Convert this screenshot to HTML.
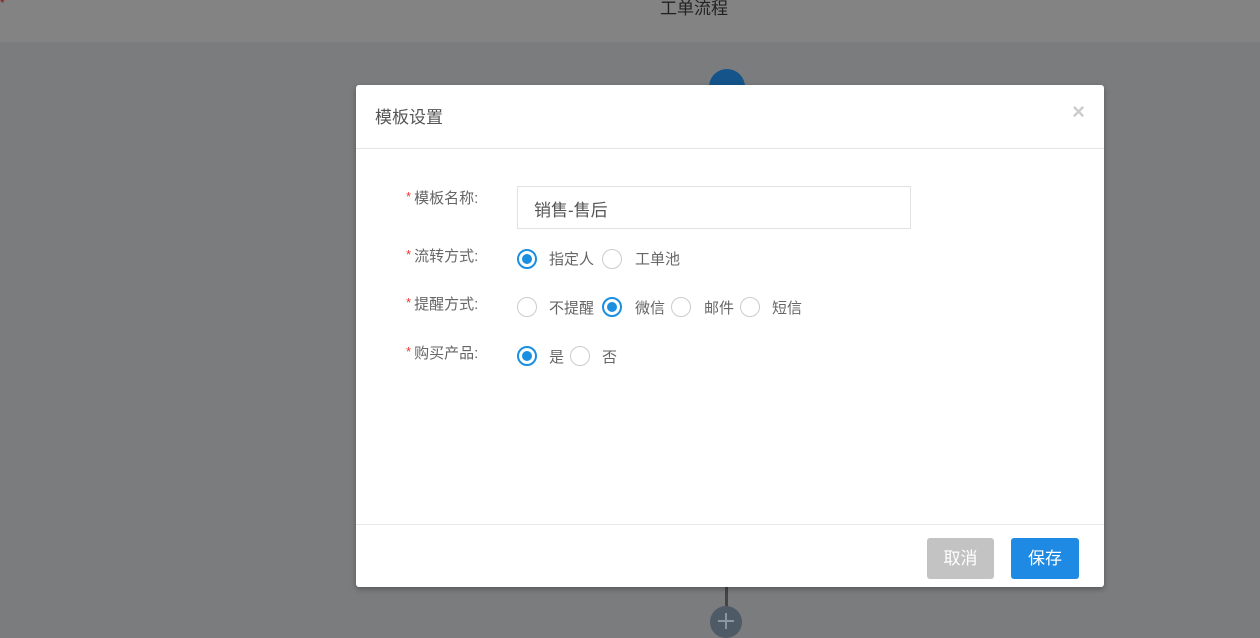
<!DOCTYPE html>
<html><head><meta charset="utf-8"><style>
*{margin:0;padding:0;box-sizing:border-box}
body{width:1260px;height:627px;overflow:hidden;background:#7b7c7e;font-family:"Liberation Sans","Noto Sans CJK SC",sans-serif;position:relative}
.top{position:absolute;left:0;top:0;width:1260px;height:42px;background:#838383}
.top .t{position:absolute;left:660px;top:-6px;font-size:17px;color:#222}
.star0{position:absolute;left:0;top:-4px;color:#8a1a1a;font-size:12px}
.c1{position:absolute;left:709px;top:69px;width:36px;height:36px;border-radius:50%;background:#14548a}
.line{position:absolute;left:725px;top:585px;width:3px;height:25px;background:#444}
.c2{position:absolute;left:710px;top:606px;width:32px;height:32px;border-radius:50%;background:#4e5a66}
.c2:before{content:"";position:absolute;left:8px;top:14px;width:16px;height:2px;background:#8a96a0}
.c2:after{content:"";position:absolute;left:15px;top:7px;width:2px;height:16px;background:#8a96a0}
.m{position:absolute;left:356px;top:85px;width:748px;height:502px;background:#fff;border-radius:3px;box-shadow:0 2px 6px rgba(0,0,0,.3)}
.hd{height:64px;border-bottom:1px solid #e5e5e5;position:relative}
.hd .tt{position:absolute;left:19px;top:18px;font-size:17px;color:#555}
.hd .x{position:absolute;right:19px;top:14px;font-size:22px;color:#ccc;font-weight:bold}
.row{position:absolute;left:0;font-size:15px;color:#666}
.lab{position:absolute;left:50px;white-space:nowrap}
.lab i{color:#e33;font-style:normal;font-size:13px;margin-right:3px;position:relative;top:-2px}
.inp{position:absolute;left:161px;top:101px;width:394px;height:43px;border:1px solid #e2e2e2;font-size:17px;color:#555;padding:9px 16px}
.r{position:absolute;width:20px;height:20px;border-radius:50%;border:1px solid #ccc}
.r.on{border:2px solid #1a8fe0}
.r.on:after{content:"";position:absolute;left:3px;top:3px;width:10px;height:10px;border-radius:50%;background:#1a8fe0}
.o{position:absolute;font-size:15px;color:#666;white-space:nowrap}
.ft{position:absolute;left:0;top:439px;width:748px;border-top:1px solid #e8e8e8}
.btn{position:absolute;top:453px;height:41px;border-radius:3px;color:#fff;font-size:17px;text-align:center;line-height:41px}
</style></head><body>
<div class="top"><span class="star0">*</span><div class="t">工单流程</div></div>
<div class="c1"></div>
<div class="line"></div><div class="c2"></div>
<div class="m">
 <div class="hd"><div class="tt">模板设置</div><div class="x">×</div></div>
 <div class="lab row" style="top:102px"><i>*</i>模板名称:</div>
 <div class="inp">销售-售后</div>
 <div class="lab row" style="top:160px"><i>*</i>流转方式:</div>
 <div class="r on" style="left:161px;top:164px"></div><div class="o" style="left:193px;top:163px">指定人</div>
 <div class="r" style="left:246px;top:164px"></div><div class="o" style="left:279px;top:163px">工单池</div>
 <div class="lab row" style="top:208px"><i>*</i>提醒方式:</div>
 <div class="r" style="left:161px;top:212px"></div><div class="o" style="left:193px;top:212px">不提醒</div>
 <div class="r on" style="left:246px;top:212px"></div><div class="o" style="left:279px;top:212px">微信</div>
 <div class="r" style="left:315px;top:212px"></div><div class="o" style="left:348px;top:212px">邮件</div>
 <div class="r" style="left:384px;top:212px"></div><div class="o" style="left:416px;top:212px">短信</div>
 <div class="lab row" style="top:257px"><i>*</i>购买产品:</div>
 <div class="r on" style="left:161px;top:261px"></div><div class="o" style="left:193px;top:261px">是</div>
 <div class="r" style="left:214px;top:261px"></div><div class="o" style="left:246px;top:261px">否</div>
 <div class="ft"></div>
 <div class="btn" style="left:571px;width:67px;background:#c3c3c3">取消</div>
 <div class="btn" style="left:655px;width:68px;background:#1e8ae3">保存</div>
</div>
</body></html>
